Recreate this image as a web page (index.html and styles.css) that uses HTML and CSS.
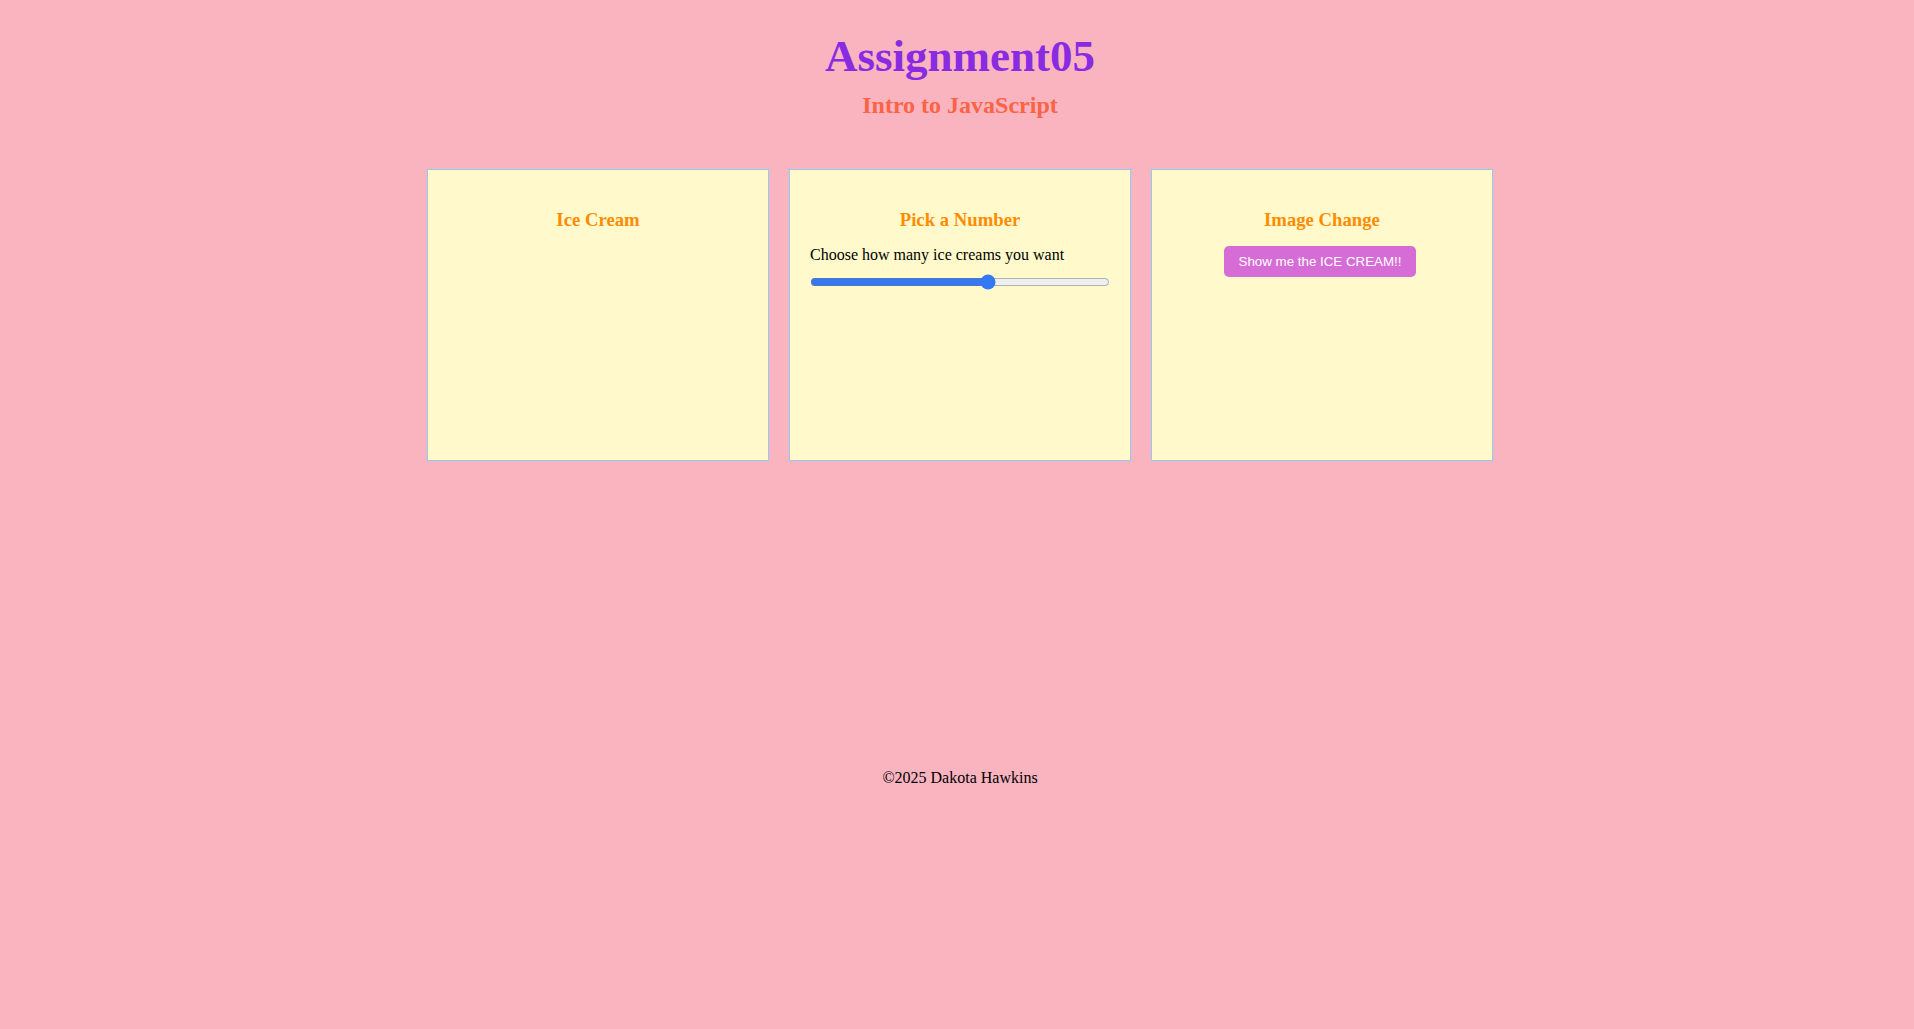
FILE: index.html
```html
<!DOCTYPE html>
<html lang="en">
<head>
<meta charset="utf-8">
<title>Assignment05</title>
<link rel="stylesheet" href="styles.css">
</head>
<body>
  <header class="page-header">
    <h1 class="title">Assignment05</h1>
    <h2 class="subtitle">Intro to JavaScript</h2>
  </header>
  <main class="cards">
    <section class="card">
      <h3 class="card-title">Ice Cream</h3>
    </section>
    <section class="card">
      <h3 class="card-title">Pick a Number</h3>
      <p class="card-text">Choose how many ice creams you want</p>
      <input class="slider" type="range" min="0" max="10" value="6">
    </section>
    <section class="card card-center">
      <h3 class="card-title">Image Change</h3>
      <button class="btn" type="button">Show me the ICE CREAM!!</button>
    </section>
  </main>
  <footer class="page-footer">
    <p class="copy">&copy;2025 Dakota Hawkins</p>
  </footer>
</body>
</html>
```

FILE: styles.css
```css
html {
  background: #f9b4c0;
}

body {
  margin: 0;
  padding: 0 0 0 6px;
  background: #f9b4c0;
  font-family: "Liberation Serif", "Times New Roman", serif;
  font-size: 16px;
  color: #000;
}

.page-header {
  text-align: center;
}

.title {
  margin: 30px 0 10px;
  font-size: 45px;
  font-weight: bold;
  color: #8a2be2;
  line-height: normal;
}

.subtitle {
  margin: 0;
  font-size: 24px;
  font-weight: bold;
  color: #fa6345;
  line-height: normal;
}

.cards {
  display: flex;
  justify-content: center;
  gap: 20px;
  margin-top: 50px;
}

.card {
  width: 300px;
  height: 250px;
  padding: 20px;
  border: 1px solid #8ccff5;
  background: #fff9cb;
  text-align: left;
}

.card-title {
  margin: 19px 0 15px;
  font-size: 18.72px;
  font-weight: bold;
  color: #ff8c00;
  text-align: center;
  line-height: normal;
}

.card-text {
  margin: 0;
  line-height: normal;
}

.slider {
  display: block;
  width: 100%;
  height: 16px;
  margin: 10px 0 0;
  accent-color: #3478f6;
}

.card-center {
  text-align: center;
}

.btn {
  display: inline-block;
  margin: 0 4px 0 0;
  padding: 8px 15px;
  border: none;
  border-radius: 5px;
  background: #d66cd6;
  color: #fff;
  font-family: "Liberation Sans", Arial, sans-serif;
  font-size: 13.333px;
  line-height: normal;
}

.page-footer {
  margin-top: 308px;
  text-align: center;
}

.copy {
  margin: 0;
  line-height: normal;
}
```
